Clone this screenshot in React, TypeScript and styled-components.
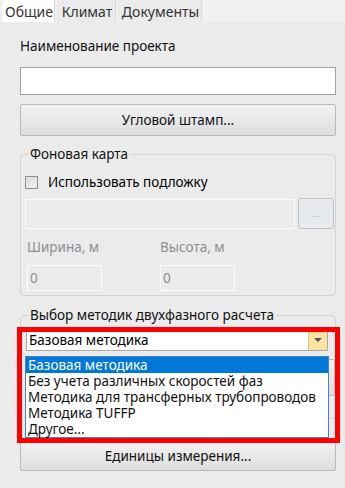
import React from 'react';
import styled, { createGlobalStyle, css } from 'styled-components';

const GlobalStyle = createGlobalStyle`
  html, body {
    margin: 0;
    padding: 0;
    background: #ebebeb;
  }
  body {
    font-family: 'Noto Sans', 'Open Sans', sans-serif;
    font-size: 13.5px;
    color: #000;
  }
`;

const Window = styled.div`
  width: 345px;
  height: 488px;
  background: #ebebeb;
  position: relative;
  overflow: hidden;
`;

const TabBar = styled.div`
  display: flex;
  gap: 2px;
  height: 22px;
  background: #f0f0f0;
  padding-left: 2px;
`;

const Tab = styled.div<{ active?: boolean; w: number }>`
  width: ${({ w }) => w}px;
  height: 22px;
  box-sizing: border-box;
  display: flex;
  align-items: center;
  justify-content: center;
  padding-left: 2px;
  color: #333;
  font-size: 14px;
  background: ${({ active }) => (active ? '#fff' : '#ebebeb')};
  border-right: 1px solid #dadada;
`;

const Content = styled.div`
  padding: 14px 9px 0 20px;
  display: flex;
  flex-direction: column;
`;

const Label = styled.div<{ disabled?: boolean }>`
  height: 20px;
  line-height: 20px;
  color: ${({ disabled }) => (disabled ? '#8e8e8e' : '#111')};
  white-space: nowrap;
`;

const TextInput = styled.div`
  height: 28px;
  box-sizing: border-box;
  background: #fff;
  border: 1px solid #a2a2a2;
  margin-top: 11px;
`;

const Button = styled.div<{ mt?: number; h?: number }>`
  height: ${({ h }) => h ?? 32}px;
  margin-top: ${({ mt }) => mt ?? 0}px;
  box-sizing: border-box;
  border: 1px solid #b9b9b9;
  border-radius: 2px;
  background: linear-gradient(#f2f2f2, #dedede);
  display: flex;
  align-items: center;
  justify-content: center;
  color: #111;
`;

const Group = styled.fieldset<{ mt: number; h: number }>`
  margin: ${({ mt }) => mt}px 0 0 0;
  height: ${({ h }) => h}px;
  box-sizing: border-box;
  border: 1px solid #d3d3d3;
  border-radius: 4px;
  padding: 0 0 0 4px;
  min-width: 0;
`;

const Legend = styled.legend`
  padding: 0 2px 0 1px;
  margin-left: 4px;
  color: #111;
  line-height: 16px;
`;

const CheckRow = styled.div`
  display: flex;
  align-items: center;
  gap: 10px;
  margin-top: 12px;
  height: 16px;
`;

const CheckBox = styled.div`
  width: 13px;
  height: 13px;
  box-sizing: border-box;
  border: 1px solid #8f8f8f;
  background: linear-gradient(135deg, #d6d6d6, #f6f6f6);
  box-shadow: inset 0 0 0 1px #e6e6e6;
`;

const FileRow = styled.div`
  display: flex;
  gap: 3px;
  margin-top: 9px;
  align-items: flex-start;
  padding-right: 1px;
`;

const DisabledInput = styled.div<{ w?: number; h: number }>`
  ${({ w }) =>
    w
      ? css`
          width: ${w}px;
        `
      : css`
          flex: 1;
        `}
  height: ${({ h }) => h}px;
  box-sizing: border-box;
  border: 1px solid #fcfcfc;
  background: #ebebeb;
  color: #8e8e8e;
  display: flex;
  align-items: center;
  padding-left: 2px;
`;

const SmallButton = styled.div`
  width: 36px;
  height: 31px;
  margin-top: -1px;
  box-sizing: border-box;
  border: 1px solid #c4c4c4;
  border-radius: 3px;
  background: #e6eaed;
  display: flex;
  align-items: center;
  justify-content: center;
  color: #9a9a9a;
  font-size: 8px;
  letter-spacing: 1px;
`;

const SizeGrid = styled.div`
  display: grid;
  grid-template-columns: 133px 1fr;
  margin-top: 8px;
  padding-left: 2px;
`;

const SizeCell = styled.div`
  display: flex;
  flex-direction: column;
  gap: 8px;
`;

const Combo = styled.div`
  margin: 6px 7px 0 1px;
  height: 22px;
  box-sizing: border-box;
  border: 1px solid #a9a9a9;
  background: #fff;
  display: flex;
  align-items: stretch;
`;

const ComboText = styled.div`
  flex: 1;
  padding-left: 2px;
  display: flex;
  align-items: center;
  white-space: nowrap;
`;

const ComboArrow = styled.div`
  width: 18px;
  background: #fbe3a3;
  border-left: 1px solid #e3c56f;
  display: flex;
  align-items: center;
  justify-content: center;
`;

const DropList = styled.div`
  position: absolute;
  left: 25px;
  top: 356px;
  width: 304px;
  box-sizing: border-box;
  border: 1px solid #3f85c9;
  background: #fff;
  z-index: 2;
`;

const DropItem = styled.div<{ selected?: boolean }>`
  height: 16px;
  line-height: 16px;
  padding-left: 2px;
  white-space: nowrap;
  background: ${({ selected }) => (selected ? '#0078d7' : '#fff')};
  color: ${({ selected }) => (selected ? '#fff' : '#111')};
`;

const Highlight = styled.div`
  position: absolute;
  left: 17px;
  top: 327px;
  width: 323px;
  height: 116px;
  box-sizing: border-box;
  border: 5px solid #ff0000;
  z-index: 3;
  pointer-events: none;
`;

const methods = [
  'Базовая методика',
  'Без учета различных скоростей фаз',
  'Методика для трансферных трубопроводов',
  'Методика TUFFP',
  'Другое...',
];

export default function App() {
  return (
    <Window>
      <GlobalStyle />
      <TabBar>
        <Tab active w={53}>Общие</Tab>
        <Tab w={59}>Климат</Tab>
        <Tab w={84}>Документы</Tab>
      </TabBar>
      <Content>
        <Label>Наименование проекта</Label>
        <TextInput />
        <Button mt={9}>Угловой штамп...</Button>

        <Group mt={10} h={150}>
          <Legend>Фоновая карта</Legend>
          <CheckRow>
            <CheckBox />
            <span>Использовать подложку</span>
          </CheckRow>
          <FileRow>
            <DisabledInput h={30} />
            <SmallButton>...</SmallButton>
          </FileRow>
          <SizeGrid>
            <SizeCell>
              <Label disabled>Ширина, м</Label>
              <DisabledInput w={75} h={26}>0</DisabledInput>
            </SizeCell>
            <SizeCell>
              <Label disabled>Высота, м</Label>
              <DisabledInput w={75} h={26}>0</DisabledInput>
            </SizeCell>
          </SizeGrid>
        </Group>

        <Group mt={11} h={112}>
          <Legend>Выбор методик двухфазного расчета</Legend>
          <Combo>
            <ComboText>Базовая методика</ComboText>
            <ComboArrow>
              <svg width="8" height="4" viewBox="0 0 8 4">
                <path d="M0 0h8L4 4z" fill="#555" />
              </svg>
            </ComboArrow>
          </Combo>
          {/* button hidden under the open drop-down list */}
          <Button mt={8} h={37} />
        </Group>

        <Button mt={22} h={30}>Единицы измерения...</Button>
      </Content>

      <DropList>
        {methods.map((m, i) => (
          <DropItem key={m} selected={i === 0}>
            {m}
          </DropItem>
        ))}
      </DropList>
      <Highlight />
    </Window>
  );
}
